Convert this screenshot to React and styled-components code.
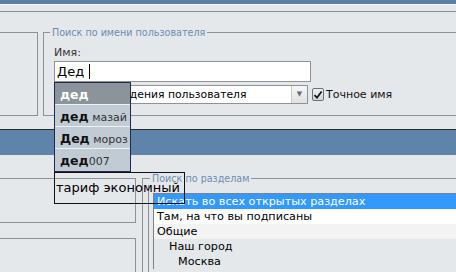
import React from "react";
import styled, { createGlobalStyle } from "styled-components";

const Global = createGlobalStyle`
  html, body { margin: 0; padding: 0; }
  body {
    background: #e5e8eb;
    font-family: "DejaVu Sans", Verdana, sans-serif;
    color: #000;
  }
  * { box-sizing: border-box; }
`;

const Page = styled.div`
  position: relative;
  width: 456px;
  height: 272px;
  overflow: hidden;
  background: #e5e8eb;
`;

const TopBar = styled.div`
  height: 4px;
  background: #5a7fa4;
`;

const Strip = styled.div`
  height: 8px;
  border-top: 1px solid #f4f6f8;
  border-bottom: 1px solid #8b8e91;
`;

const UpperRow = styled.div`
  display: flex;
  align-items: flex-start;
  height: 117px;
  padding-top: 14px;
`;

const SideBox = styled.div`
  flex: none;
  width: 38px;
  height: 84px;
  margin-top: 6px;
  border: 1px solid #8e9195;
  border-left: none;
`;

const Fieldset = styled.fieldset`
  flex: none;
  margin: 0 0 0 ${(p) => p.$gap}px;
  width: 440px;
  min-width: 0;
  padding: ${(p) => p.$pad};
  border: 1px solid #8e9195;
  border-right: none;
  ${(p) => (p.$open ? "border-bottom: none;" : "")}
`;

const Legend = styled.legend`
  font-size: 9.6px;
  line-height: 13px;
  color: #6a8db2;
  padding: 0 2px;
  margin-left: ${(p) => p.$shift}px;
`;

const Label = styled.div`
  font-size: 11px;
  line-height: 15px;
  color: #333;
  margin-bottom: 1px;
`;

const TextInput = styled.div`
  width: 257px;
  height: 21px;
  background: #fff;
  border: 1px solid #8f9396;
  font-size: 13px;
  line-height: 19px;
  padding-left: 2px;
  display: flex;
  align-items: center;
  white-space: pre;
`;

const Caret = styled.span`
  display: inline-block;
  width: 1px;
  height: 15px;
  background: #000;
  margin-left: 1px;
`;

const OptionsRow = styled.div`
  display: flex;
  align-items: center;
  margin-top: 3px;
  height: 19px;
`;

const Select = styled.div`
  width: 254px;
  height: 19px;
  background: #fff;
  border: 1px solid #8f9396;
  display: flex;
  font-size: 10.8px;
  line-height: 17px;
`;

const SelectText = styled.div`
  flex: 1;
  padding-left: 3px;
  white-space: nowrap;
  overflow: hidden;
`;

const ArrowButton = styled.div`
  width: 16px;
  border-left: 1px solid #c9cbcd;
  background: linear-gradient(#f6f6f6, #dfe1e3);
  display: flex;
  align-items: center;
  justify-content: center;
  font-size: 7px;
  color: #6a6d70;
`;

const CheckBox = styled.div`
  width: 12px;
  height: 13px;
  margin-left: 4px;
  border: 1px solid #6d7073;
  border-radius: 2px;
  background: linear-gradient(#eceef0, #d3d6d9);
  display: flex;
  align-items: center;
  justify-content: center;
`;

const CheckLabel = styled.span`
  margin-left: 2px;
  font-size: 11px;
  color: #111;
`;

const Header = styled.div`
  height: 26px;
  border-top: 1px solid #26292d;
  background: #5e84a9;
`;

const LowerRow = styled.div`
  display: flex;
  align-items: flex-start;
  padding-top: 17px;
`;

const LeftCol = styled.div`
  flex: none;
  width: 136px;
  margin-top: 6px;
  display: flex;
  flex-direction: column;
`;

const LowBox = styled.div`
  height: ${(p) => p.$h}px;
  margin-top: ${(p) => p.$mt}px;
  border: 1px solid #8e9195;
  border-left: none;
  ${(p) => (p.$open ? "border-bottom: none;" : "")}
`;

const Inner = styled.div`
  border-left: 1px solid #8e9195;
  padding: 8px 0 0 4px;
  height: 100px;
`;

const List = styled.div`
  border: 1px solid #7f8285;
  border-right: none;
  border-bottom: none;
`;

const Row = styled.div`
  height: 15px;
  line-height: 15px;
  font-size: 11.2px;
  white-space: nowrap;
  padding-left: ${(p) => 3 + (p.$indent || 0)}px;
  background: ${(p) => p.$bg || "transparent"};
  color: ${(p) => (p.$selected ? "#fff" : "#000")};
`;

const Popup = styled.div`
  position: absolute;
  left: 54px;
  top: 82px;
  width: 77px;
  border: 1px solid #1d2a52;
  background: #c1cbd4;
`;

const Item = styled.div`
  height: 22px;
  line-height: 21px;
  padding-left: 5px;
  white-space: nowrap;
  overflow: hidden;
  border-bottom: 1px solid ${(p) => (p.$last ? "transparent" : "#eef1f4")};
  background: ${(p) => (p.$active ? "#8b949b" : "#c1cbd4")};
`;

const Bold = styled.b`
  font-size: 12.5px;
  color: ${(p) => (p.$active ? "#fff" : "#111")};
`;

const Rest = styled.span`
  font-size: 11px;
  color: #333;
`;

const Tariff = styled.div`
  position: absolute;
  left: 54px;
  top: 172px;
  width: 131px;
  height: 32px;
  border: 1px solid #111;
  font-size: 13px;
  line-height: 30px;
  padding-left: 1px;
  white-space: nowrap;
`;

const suggestions = [
  { b: "дед", r: "", active: true },
  { b: "дед", r: " мазай" },
  { b: "Дед", r: " мороз" },
  { b: "дед", r: "007" },
];

const sections = [
  { t: "Искать во всех открытых разделах", selected: true, bg: "#3399ff" },
  { t: "Там, на что вы подписаны", bg: "#ffffff" },
  { t: "Общие", bg: "#f3f3f3" },
  { t: "Наш город", indent: 12 },
  { t: "Москва", indent: 21 },
];

export default function App() {
  return (
    <Page>
      <Global />
      <TopBar />
      <Strip />
      <UpperRow>
        <SideBox />
        <Fieldset $gap={5} $pad="6px 10px 11px">
          <Legend $shift={-4}>Поиск по имени пользователя</Legend>
          <Label>Имя:</Label>
          <TextInput>
            Дед <Caret />
          </TextInput>
          <OptionsRow>
            <Select>
              <SelectText>По дате рождения пользователя</SelectText>
              <ArrowButton>▼</ArrowButton>
            </Select>
            <CheckBox>
              <svg width="10" height="10" viewBox="0 0 10 10">
                <path d="M1.5 5.2 L4 7.8 L8.6 1.6" fill="none" stroke="#111" strokeWidth="1.7" />
              </svg>
            </CheckBox>
            <CheckLabel>Точное имя</CheckLabel>
          </OptionsRow>
        </Fieldset>
      </UpperRow>
      <Header />
      <LowerRow>
        <LeftCol>
          <LowBox $h={45} $mt={0} />
          <LowBox $h={60} $mt={15} $open />
        </LeftCol>
        <Fieldset $gap={6} $pad="0 0 0 5px" $open>
          <Legend $shift={2}>Поиск по разделам</Legend>
          <Inner>
            <List>
              {sections.map((s) => (
                <Row key={s.t} $bg={s.bg} $selected={s.selected} $indent={s.indent}>
                  {s.t}
                </Row>
              ))}
            </List>
          </Inner>
        </Fieldset>
      </LowerRow>
      <Popup>
        {suggestions.map((s, i) => (
          <Item key={i} $active={s.active} $last={i === suggestions.length - 1}>
            <Bold $active={s.active}>{s.b}</Bold>
            <Rest>{s.r}</Rest>
          </Item>
        ))}
      </Popup>
      <Tariff>тариф экономный</Tariff>
    </Page>
  );
}
